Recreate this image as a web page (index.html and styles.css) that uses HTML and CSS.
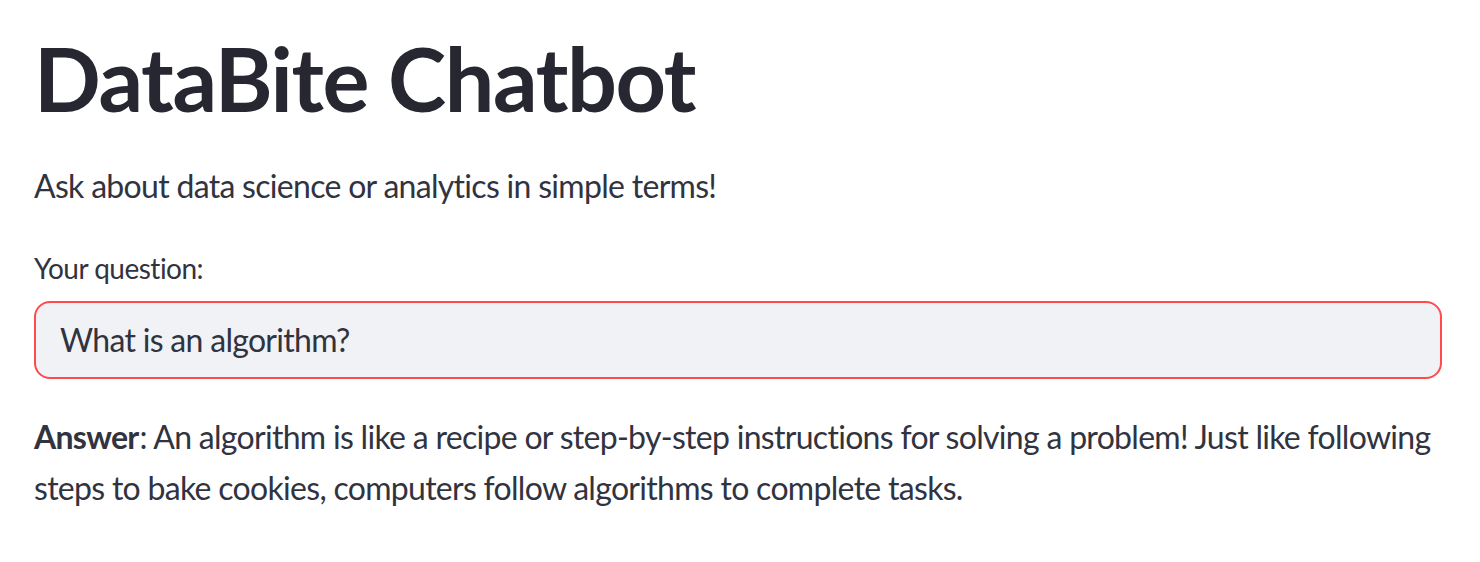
FILE: index.html
```html
<!DOCTYPE html>
<html lang="en">
<head>
<meta charset="utf-8">
<title>DataBite Chatbot</title>
<link rel="stylesheet" href="styles.css">
</head>
<body>
<main class="main">
  <h1 class="title">DataBite Chatbot</h1>
  <p class="subtitle">Ask about data science or analytics in simple terms!</p>
  <div class="field">
    <label class="label" for="q">Your question:</label>
    <div class="input-wrap">
      <input id="q" class="input" type="text" value="What is an algorithm?">
    </div>
  </div>
  <p class="answer"><strong>Answer</strong>: An algorithm is like a recipe or step-by-step instructions for solving a problem! Just like following steps to bake cookies, computers follow algorithms to complete tasks.</p>
</main>
</body>
</html>
```

FILE: styles.css
```css
html, body {
  margin: 0;
  padding: 0;
  background: #ffffff;
}
body {
  font-family: Lato, "Noto Sans", sans-serif;
  color: #31333f;
}
.main {
  padding: 0 38px 0 34px;
  display: flex;
  flex-direction: column;
}
.title {
  margin: 26px 0 0 0;
  font-size: 88px;
  line-height: 1.2;
  font-weight: 700;
  letter-spacing: -1.4px;
  color: #262730;
}
.subtitle {
  margin: 28px 0 0 0;
  font-size: 32px;
  line-height: 1.6;
  letter-spacing: -0.7px;
}
.field {
  margin-top: 36px;
  display: flex;
  flex-direction: column;
}
.label {
  font-size: 28px;
  line-height: 1.5;
  letter-spacing: -0.5px;
  margin-bottom: 12px;
}
.input-wrap {
  box-sizing: border-box;
  border: 2px solid #ff4b4b;
  border-radius: 16px;
  background: #f0f2f6;
  height: 78px;
  display: flex;
  align-items: center;
}
.input {
  border: none;
  outline: none;
  background: transparent;
  font: inherit;
  color: #31333f;
  font-size: 32px;
  letter-spacing: -0.7px;
  padding: 0 24px;
  width: 100%;
}
.answer {
  margin: 32px 0 0 0;
  font-size: 32px;
  line-height: 1.6;
  letter-spacing: -0.7px;
}
.answer strong {
  font-weight: 700;
  padding-right: 1px;
}
```
